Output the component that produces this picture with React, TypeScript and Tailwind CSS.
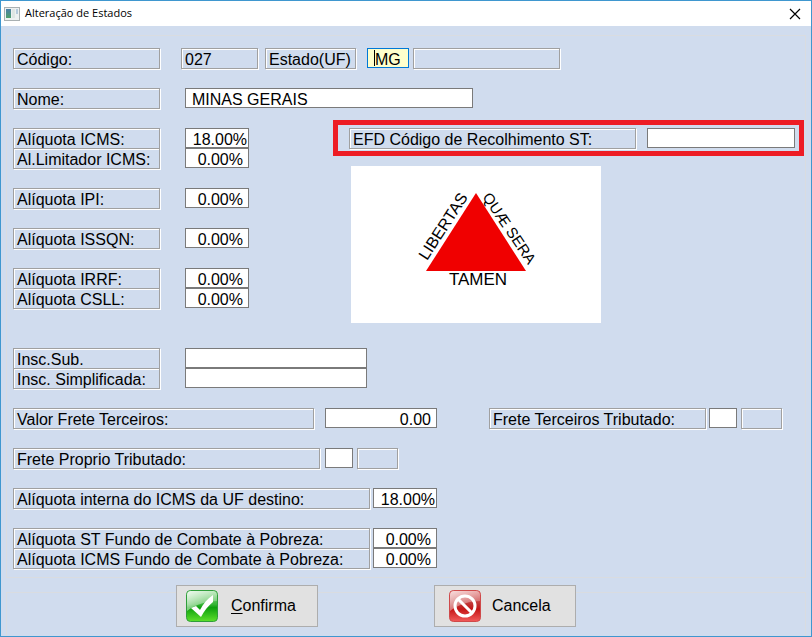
import React from 'react';
import { useState } from 'react';
import clsx from 'clsx';

const boxStyle =
  'h-[21px] -mb-px shrink-0 whitespace-nowrap border border-[#a0a0a0] px-[3px] leading-[22px] shadow-[1px_1px_0_#fff,inset_1px_1px_0_#fff]';

const inputStyle =
  'block h-5 shrink-0 border border-[#7a7a7a] bg-white pt-1 leading-[14px] outline-none';

interface FieldLabelProps {
  htmlFor: string;
  className: string;
  children: React.ReactNode;
}

const FieldLabel: React.FC<FieldLabelProps> = ({ htmlFor, className, children }) => (
  <label htmlFor={htmlFor} className={clsx(boxStyle, 'block', className)}>
    {children}
  </label>
);

interface PercentInputProps {
  id: string;
  initial: string;
}

const PercentInput: React.FC<PercentInputProps> = ({ id, initial }) => {
  const [value, setValue] = useState(initial);

  return (
    <input
      id={id}
      type="text"
      value={value}
      onChange={(e) => setValue(e.target.value)}
      className={clsx(inputStyle, 'w-16 text-right', value.length > 5 ? 'pr-px' : 'pr-[5px]')}
    />
  );
};

interface RateRowProps {
  id: string;
  label: string;
  initial: string;
  wide?: boolean;
}

const RateRow: React.FC<RateRowProps> = ({ id, label, initial, wide }) => (
  <div className={clsx('flex items-start', wide ? 'gap-[3px]' : 'gap-[25px]')}>
    <FieldLabel htmlFor={id} className={wide ? 'w-[357px]' : 'w-[147px]'}>
      {label}
    </FieldLabel>
    <PercentInput id={id} initial={initial} />
  </div>
);

const WindowIcon = () => (
  <svg width="16" height="14" viewBox="0 0 16 14" aria-hidden="true">
    <defs>
      <linearGradient id="pane" x1="0" y1="0" x2="0" y2="1">
        <stop offset="0" stopColor="#4c7fa8" />
        <stop offset="1" stopColor="#4fa06a" />
      </linearGradient>
    </defs>
    <rect x="0.5" y="0.5" width="15" height="13" fill="#eef1f1" stroke="#a9b0b2" />
    <rect x="2" y="2" width="5" height="9" fill="url(#pane)" />
    <rect x="8" y="2" width="3" height="9" fill="#dfe6e4" />
    <rect x="12" y="2" width="2" height="5" fill="#b6cbdc" />
  </svg>
);

const Flag = () => (
  <svg
    width="250"
    height="157"
    viewBox="0 0 250 157"
    role="img"
    aria-label="Bandeira de Minas Gerais"
    className="bg-white"
    fontFamily="'Liberation Sans', Arial, sans-serif"
    fontSize="16"
  >
    <polygon points="125,27 75,105 175,105" fill="#f00000" />
    <text transform="translate(76 95) rotate(-57)">LIBERTAS</text>
    <text transform="translate(131 31) rotate(56)" fontSize="15">QUÆ SERA</text>
    <text x="127" y="119" textAnchor="middle" fontSize="17">TAMEN</text>
  </svg>
);

const ConfirmIcon = () => (
  <svg width="32" height="32" viewBox="0 0 32 32" aria-hidden="true">
    <defs>
      <linearGradient id="green" x1="0" y1="0" x2="0" y2="1">
        <stop offset="0" stopColor="#8fd88f" />
        <stop offset="0.45" stopColor="#35b535" />
        <stop offset="0.55" stopColor="#0d9f0d" />
        <stop offset="1" stopColor="#5fe02c" />
      </linearGradient>
      <linearGradient id="greenGloss" x1="0" y1="0" x2="1" y2="1">
        <stop offset="0" stopColor="#fff" stopOpacity="0.85" />
        <stop offset="1" stopColor="#fff" stopOpacity="0.05" />
      </linearGradient>
    </defs>
    <rect x="0.5" y="0.5" width="31" height="31" rx="4" fill="url(#green)" stroke="#2f9e3a" />
    <path d="M1 5a4 4 0 0 1 4-4h22a4 4 0 0 1 4 4v6C22 11 10 14 1 21z" fill="url(#greenGloss)" />
    <path d="M5 18l5-2 4 4c3-6 7-11 13-15v7c-5 4-9 9-12 15z" fill="#fff" />
  </svg>
);

const CancelIcon = () => (
  <svg width="32" height="32" viewBox="0 0 32 32" aria-hidden="true">
    <defs>
      <linearGradient id="red" x1="0" y1="0" x2="0" y2="1">
        <stop offset="0" stopColor="#e07878" />
        <stop offset="0.45" stopColor="#c03030" />
        <stop offset="0.6" stopColor="#c41616" />
        <stop offset="1" stopColor="#f25a5a" />
      </linearGradient>
      <linearGradient id="redGloss" x1="0" y1="0" x2="1" y2="1">
        <stop offset="0" stopColor="#fff" stopOpacity="0.75" />
        <stop offset="1" stopColor="#fff" stopOpacity="0.05" />
      </linearGradient>
    </defs>
    <rect x="0.5" y="0.5" width="31" height="31" rx="4" fill="url(#red)" stroke="#cf4a4a" />
    <path d="M1 5a4 4 0 0 1 4-4h22a4 4 0 0 1 4 4v6C22 11 10 14 1 21z" fill="url(#redGloss)" />
    <circle cx="16" cy="16" r="10" fill="none" stroke="#fff" strokeWidth="3" />
    <path d="M9 9l14 14" stroke="#fff" strokeWidth="3" />
  </svg>
);

const App: React.FC = () => {
  const [uf, setUf] = useState('MG');
  const [nome, setNome] = useState('MINAS GERAIS');
  const [valorFrete, setValorFrete] = useState('0.00');

  return (
    <div className="flex min-h-screen flex-col border border-[#3f97cf] bg-[#d0dcee] font-['Liberation_Sans',Arial,sans-serif] text-base text-black">
      <header className="flex h-[25px] items-center bg-white pl-[3px] pr-[9px]">
        <WindowIcon />
        <h1 className="ml-[5px] flex-1 font-['Open_Sans','Noto_Sans',sans-serif] text-[11px]">
          Alteração de Estados
        </h1>
        <button type="button" aria-label="Fechar" className="p-px">
          <svg width="12" height="12" viewBox="0 0 12 12" stroke="#000" strokeWidth="1.2">
            <path d="M1 1l10 10M11 1L1 11" />
          </svg>
        </button>
      </header>

      <form className="flex flex-1 flex-col px-[5px] pt-[9px]" onSubmit={(e) => e.preventDefault()}>
        <div className="flex flex-col gap-5 border border-[#d9dce0] pb-[9px] pl-1.5 pt-3">
          <div className="flex items-start">
            <FieldLabel htmlFor="codigo" className="w-[147px]">Código:</FieldLabel>
            <output id="codigo" className={clsx(boxStyle, 'ml-[21px] w-[77px]')}>027</output>
            <FieldLabel htmlFor="uf" className="ml-[7px] w-[91px]">Estado(UF)</FieldLabel>
            <div className="relative ml-[11px]">
              <input
                id="uf"
                type="text"
                value={uf}
                onChange={(e) => setUf(e.target.value)}
                className="block h-5 w-[42px] border border-[#0078d7] bg-[#ffffcc] pl-[7px] pt-1 leading-[14px] outline-none"
              />
              <span className="absolute left-[7px] top-0.5 h-4 w-px bg-black" />
            </div>
            <div className={clsx(boxStyle, 'ml-1 w-[147px]')} />
          </div>

          <div className="flex items-start gap-[25px]">
            <FieldLabel htmlFor="nome" className="w-[147px]">Nome:</FieldLabel>
            <input
              id="nome"
              type="text"
              value={nome}
              onChange={(e) => setNome(e.target.value)}
              className={clsx(inputStyle, 'w-72 pl-1.5')}
            />
          </div>

          <div className="flex items-start">
            <div className="flex flex-col gap-5">
              <div>
                <RateRow id="icms" label="Alíquota ICMS:" initial="18.00%" />
                <RateRow id="limitador" label="Al.Limitador ICMS:" initial="0.00%" />
              </div>
              <RateRow id="ipi" label="Alíquota IPI:" initial="0.00%" />
              <RateRow id="issqn" label="Alíquota ISSQN:" initial="0.00%" />
              <div>
                <RateRow id="irrf" label="Alíquota IRRF:" initial="0.00%" />
                <RateRow id="csll" label="Alíquota CSLL:" initial="0.00%" />
              </div>
            </div>

            <div className="-mt-2 ml-[84px] flex flex-1 flex-col pb-[5px] pr-px">
              <div className="flex h-9 items-start border-5 border-[#ed1c24] pl-[11px] pr-1 pt-[3px]">
                <FieldLabel htmlFor="efd" className="w-[287px]">
                  EFD Código de Recolhimento ST:
                </FieldLabel>
                <input id="efd" type="text" className={clsx(inputStyle, 'ml-[11px] w-0 min-w-0 flex-1 px-1')} />
              </div>
              <div className="ml-[18px] mt-2.5 flex">
                <Flag />
              </div>
            </div>
          </div>

          <div>
            <div className="flex items-start gap-[25px]">
              <FieldLabel htmlFor="inscSub" className="w-[147px]">Insc.Sub.</FieldLabel>
              <input id="inscSub" type="text" className={clsx(inputStyle, 'w-[182px] px-1')} />
            </div>
            <div className="flex items-start gap-[25px]">
              <FieldLabel htmlFor="inscSimp" className="w-[147px]">Insc. Simplificada:</FieldLabel>
              <input id="inscSimp" type="text" className={clsx(inputStyle, 'w-[182px] px-1')} />
            </div>
          </div>

          <div className="flex items-start">
            <FieldLabel htmlFor="valorFrete" className="w-[301px]">Valor Frete Terceiros:</FieldLabel>
            <input
              id="valorFrete"
              type="text"
              value={valorFrete}
              onChange={(e) => setValorFrete(e.target.value)}
              className={clsx(inputStyle, 'ml-[11px] w-28 pr-[5px] text-right')}
            />
            <FieldLabel htmlFor="freteTerc" className="ml-[52px] w-[217px]">
              Frete Terceiros Tributado:
            </FieldLabel>
            <input id="freteTerc" type="text" className={clsx(inputStyle, 'ml-[3px] w-7 px-1')} />
            <div className={clsx(boxStyle, 'ml-1 w-[41px]')} />
          </div>

          <div className="flex items-start">
            <FieldLabel htmlFor="freteProprio" className="w-[307px]">Frete Proprio Tributado:</FieldLabel>
            <input id="freteProprio" type="text" className={clsx(inputStyle, 'ml-[5px] w-7 px-1')} />
            <div className={clsx(boxStyle, 'ml-1 w-[41px]')} />
          </div>

          <RateRow wide id="interna" label="Alíquota interna do ICMS da UF destino:" initial="18.00%" />

          <div>
            <RateRow wide id="fundoSt" label="Alíquota ST Fundo de Combate à Pobreza:" initial="0.00%" />
            <RateRow wide id="fundoIcms" label="Alíquota ICMS Fundo de Combate à Pobreza:" initial="0.00%" />
          </div>
        </div>

        {/* Actions */}
        <div className="mt-3.5 flex flex-1 items-start gap-[116px] border-x border-t border-[#d9dce0] pl-[169px]">
          <button
            type="submit"
            className="-mt-2 flex h-[42px] w-[142px] items-center gap-[13px] border border-[#adadad] bg-[#e1e1e1] pl-[9px]"
          >
            <ConfirmIcon />
            <span><u className="underline-offset-2">C</u>onfirma</span>
          </button>
          <button
            type="button"
            className="-mt-2 flex h-[42px] w-[142px] items-center gap-[11px] border border-[#adadad] bg-[#e1e1e1] pl-3.5"
          >
            <CancelIcon />
            <span>Cancela</span>
          </button>
        </div>
      </form>
    </div>
  );
};

export default App;
